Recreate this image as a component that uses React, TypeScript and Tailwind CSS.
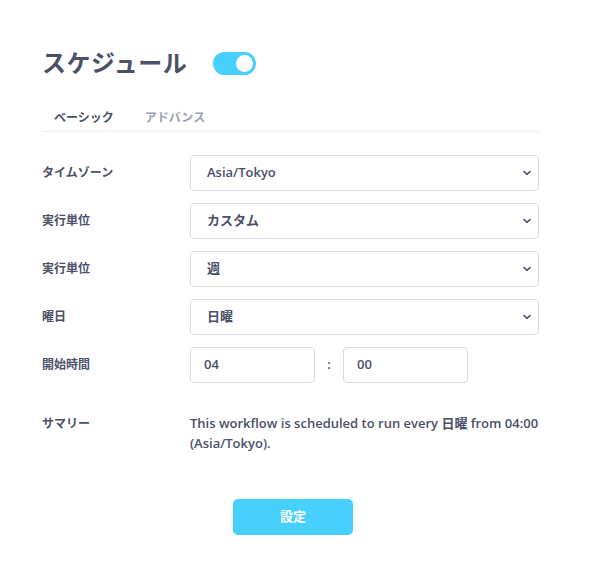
import React from "react";

const Chevron = () => (
  <svg width="10" height="10" viewBox="0 0 10 10" className="absolute right-[6px] top-1/2 -translate-y-1/2">
    <path d="M2 3.5 L5 6.5 L8 3.5" fill="none" stroke="#4b5068" strokeWidth="1.6" strokeLinecap="round" strokeLinejoin="round" />
  </svg>
);

const Select = ({ value }: { value: string }) => (
  <div className="relative h-[36px] w-[349px] rounded-[4px] border border-[#d7dce4] bg-white flex items-center pl-[16px] text-[13px] font-semibold text-[#4b5068]">
    {value}
    <Chevron />
  </div>
);

const Row = ({ label, children }: { label: string; children: React.ReactNode }) => (
  <div className="flex items-center h-[36px]">
    <div className="w-[148px] text-[12px] font-semibold text-[#4b5068]">{label}</div>
    {children}
  </div>
);

export default function App() {
  return (
    <div
      className="w-[589px] h-[569px] bg-white pt-[46px] pl-[42px]"
      style={{ fontFamily: '"Open Sans", "Noto Sans CJK JP", sans-serif' }}
    >
      <div className="flex items-center h-[34px]">
        <h1 className="text-[24px] font-bold text-[#4b5068] tracking-[0.5px]">スケジュール</h1>
        <div className="ml-[26px] w-[43px] h-[23px] rounded-full bg-[#47cffd] flex items-center justify-end pr-[3px]">
          <div className="w-[17px] h-[17px] rounded-full bg-white" />
        </div>
      </div>
      <div className="mt-[28px] w-[498px] border-b border-[#eef0f3] flex h-[24px] items-end pb-[4px] pl-[12px] gap-[31px] text-[12px] font-bold">
        <span className="text-[#4b5068]">ベーシック</span>
        <span className="text-[#9ca1b3]">アドバンス</span>
      </div>
      <div className="mt-[23px] flex flex-col gap-[12px]">
        <Row label="タイムゾーン"><Select value="Asia/Tokyo" /></Row>
        <Row label="実行単位"><Select value="カスタム" /></Row>
        <Row label="実行単位"><Select value="週" /></Row>
        <Row label="曜日"><Select value="日曜" /></Row>
        <Row label="開始時間">
          <div className="h-[36px] w-[125px] rounded-[4px] border border-[#d7dce4] flex items-center pl-[13px] text-[13px] font-semibold text-[#4b5068]">04</div>
          <div className="w-[28px] text-center text-[13px] font-semibold text-[#4b5068]">:</div>
          <div className="h-[36px] w-[125px] rounded-[4px] border border-[#d7dce4] flex items-center pl-[13px] text-[13px] font-semibold text-[#4b5068]">00</div>
        </Row>
      </div>
      <div className="mt-[30px] flex">
        <div className="w-[148px] pt-[2px] text-[12px] font-semibold text-[#4b5068]">サマリー</div>
        <div className="w-[355px] text-[13px] leading-[20px] font-semibold text-[#4b5068]">
          This workflow is scheduled to run every 日曜 from 04:00 (Asia/Tokyo).
        </div>
      </div>
      <div className="mt-[46px] ml-[191px] w-[120px] h-[36px] rounded-[5px] bg-[#47cffd] flex items-center justify-center text-white text-[13px] font-bold">
        設定
      </div>
    </div>
  );
}
